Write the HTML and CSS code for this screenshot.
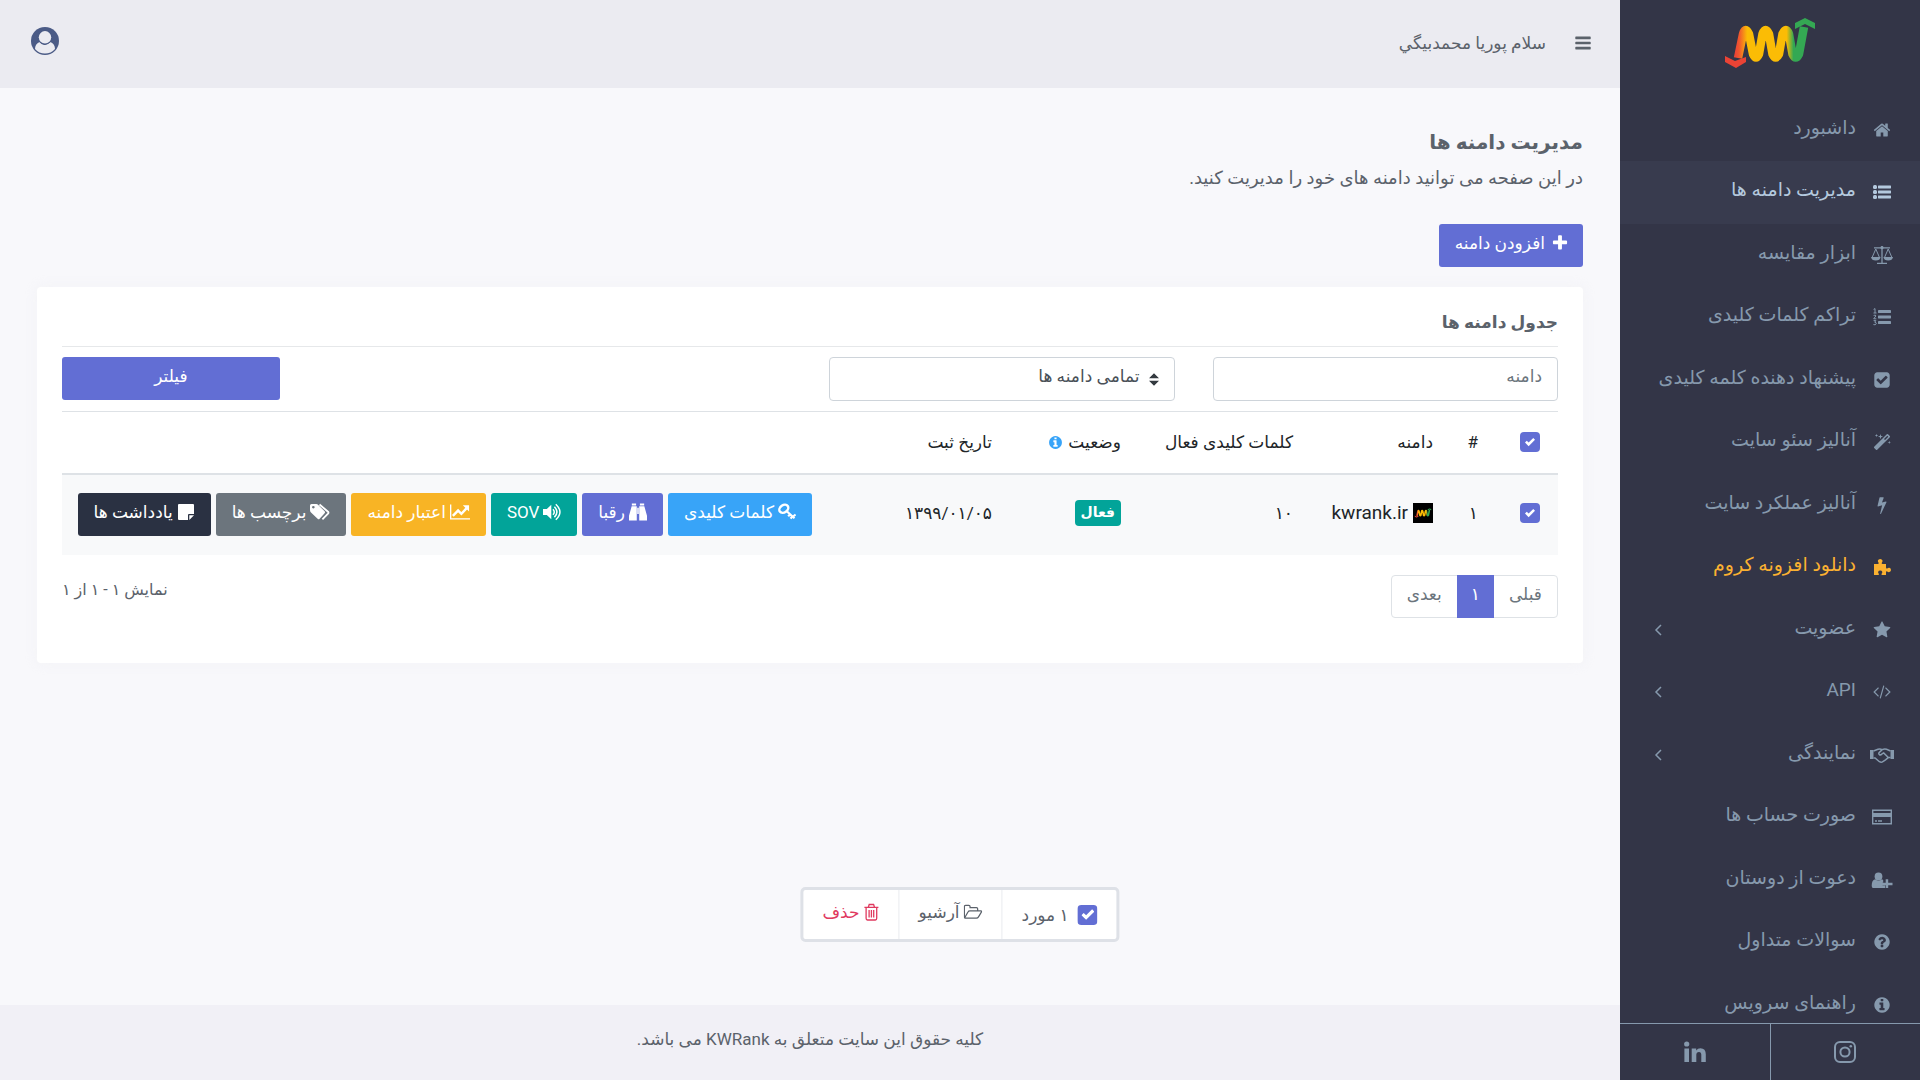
FILE: index.html
```html
<!DOCTYPE html>
<html lang="fa" dir="rtl">
<head>
    <meta charset="UTF-8">
    <meta name="viewport" content="width=device-width, initial-scale=1.0">
    <title>مدیریت دامنه ها</title>
    <link rel="stylesheet" href="styles.css">
</head>
<body>
    <!-- icon sprite -->
    <svg class="sprite" aria-hidden="true">
        <defs>
            <linearGradient id="logoGradient" gradientUnits="userSpaceOnUse" x1="10" y1="0" x2="78" y2="0">
                <stop offset="0" stop-color="#ea4335"/>
                <stop offset="0.06" stop-color="#f0562f"/>
                <stop offset="0.18" stop-color="#fbbc05"/>
                <stop offset="0.76" stop-color="#fbbc05"/>
                <stop offset="0.86" stop-color="#34a853"/>
                <stop offset="1" stop-color="#34a853"/>
            </linearGradient>
        </defs>
        <symbol id="logo" viewBox="0 0 90 50">
            <path d="M13 40 L18 16 Q20.500 8 24 16 L28 36 Q31 43 34 36 L37.500 16 Q40.500 8 44 16 L47.500 36 Q50.500 43 54 36 L57.500 16 Q61 8 64 16 L67.500 36 Q70.500 43 74 36 L79 9" fill="none" stroke="url(#logoGradient)" stroke-width="8.500" stroke-linejoin="round"/>
            <path d="M0 38 L10 43 L21 39 V44 L11 50 L0 44 Z" fill="#ea4335"/>
            <path d="M70 5 L80 0 L90 5 V11 L80 6 L70 11 Z" fill="#34a853"/>
        </symbol>
        <symbol id="home" viewBox="0 0 1792 1792"><path d="M1472 992v480q0 26-19 45t-45 19h-384v-384h-256v384h-384q-26 0-45-19t-19-45v-480q0-1 .5-3t.5-3l575-474 575 474q1 2 1 6zm223-69l-62 74q-8 9-21 11h-3q-13 0-21-7l-692-577-692 577q-12 8-24 7-13-2-21-11l-62-74q-8-10-7-23.5t11-21.5l719-599q32-26 76-26t76 26l244 204v-195q0-14 9-23t23-9h192q14 0 23 9t9 23v408l219 182q10 8 11 21.5t-7 23.5z"/></symbol>
        <symbol id="list" viewBox="0 0 18 18"><rect x="0" y="2" width="4" height="4" rx="1.5"/><rect x="0" y="7" width="4" height="4" rx="1.5"/><rect x="0" y="12" width="4" height="4" rx="1.5"/><rect x="5" y="2.5" width="13" height="3" rx=".4"/><rect x="5" y="7.5" width="13" height="3" rx=".4"/><rect x="5" y="12.5" width="13" height="3" rx=".4"/></symbol>
        <symbol id="list-ol" viewBox="0 0 18 18"><rect x="5" y="2" width="13" height="3" rx=".4"/><rect x="5" y="7.5" width="13" height="3" rx=".4"/><rect x="5" y="13" width="13" height="3" rx=".4"/><path d="M.6 1.4 2 .6V5M.5 5h3M.6 7.4q2.4-1 2.2.6L.7 10.8h2.6M.6 12.6h2.3l-1.2 1.6q1.8 0 1.5 1.7-.6 1.4-2.8.7" fill="none" stroke="currentColor"/></symbol>
        <symbol id="balance" viewBox="0 0 22 20"><path d="M3 2.8h16M11 1v17M6 18.3h10" fill="none" stroke="currentColor" stroke-width="1.3"/><circle cx="11" cy="2.7" r="1.6"/><path d="M4.8 4 1.1 12.5M4.8 4l3.7 8.5M17.2 4l-3.7 8.5M17.2 4l3.7 8.5" fill="none" stroke="currentColor" stroke-width="1"/><path d="M0 12h9.600q-.6 3.500-4.800 3.500T0 12zM12.400 12H22q-.6 3.500-4.800 3.500t-4.800-3.500z"/></symbol>
        <symbol id="check-square" viewBox="0 0 1792 1792"><path d="M813 1299l614-614q19-19 19-45t-19-45l-102-102q-19-19-45-19t-45 19l-467 467-211-211q-19-19-45-19t-45 19l-102 102q-19 19-19 45t19 45l358 358q19 19 45 19t45-19zm851-883v960q0 119-84.500 203.500t-203.500 84.500h-960q-119 0-203.500-84.500t-84.500-203.500v-960q0-119 84.500-203.500t203.500-84.500h960q119 0 203.500 84.500t84.500 203.500z"/></symbol>
        <symbol id="magic" viewBox="0 0 18 18"><path d="M13.800 1.200q.6-.6 1.200 0l1.800 1.800q.6.6 0 1.200L4.200 16.800q-.6.600-1.200 0L1.200 15q-.6-.6 0-1.200zM14.300 2.700 11 6l1 1 3.300-3.300z" fill-rule="evenodd"/><path d="m3.500.8.4 1.300 1.300.4-1.300.4-.4 1.300-.4-1.300-1.300-.4 1.300-.4zM7.500 1l.6 2 2 .6-2 .6-.6 2-.6-2-2-.6 2-.6zM16.300 7.700l.4 1.300 1.300.4-1.300.4-.4 1.300-.4-1.300-1.300-.4 1.300-.4z"/></symbol>
        <symbol id="bolt" viewBox="0 0 1792 1792"><path d="M1333 566q18 20 7 44l-540 1157q-13 25-42 25-4 0-14-2-17-5-25.500-19t-4.500-30l197-808-406 101q-4 1-12 1-18 0-31-11-18-15-13-39l201-825q4-14 16-23t28-9h328q19 0 32 12.500t13 29.500q0 8-5 18l-171 463 396-98q8-2 12-2 19 0 34 15z"/></symbol>
        <symbol id="puzzle" viewBox="0 0 18 18"><path d="M1 6h3.600q1.600 0 1-1.200Q4.600 3.600 4.900 2.500 5.400.9 7.200.9t2.300 1.600q.3 1.100-.7 2.300-.6 1.200 1 1.200H13v3.300q0 1.700 1.200 1.100 1.100-.9 2.200-.6 1.600.5 1.600 2.200t-1.600 2.100q-1.100.3-2.200-.7-1.200-.5-1.200 1V17H9.200q-1.200 0-.6-1.300 1-1.100.6-2-.4-1.200-2-1.200t-2 1.200q-.4.900.6 2 .6 1.300-.6 1.300H1z"/></symbol>
        <symbol id="star" viewBox="0 0 1792 1792"><path d="M1728 647q0 22-26 48l-363 354 86 500q1 7 1 20 0 21-10.500 35.500t-30.500 14.500q-19 0-40-12l-449-236-449 236q-22 12-40 12-21 0-31.500-14.500t-10.500-35.500q0-6 2-20l86-500-364-354q-25-27-25-48 0-37 56-46l502-73 225-455q19-41 49-41t49 41l225 455 502 73q56 9 56 46z"/></symbol>
        <symbol id="code" viewBox="0 0 1920 1920"><path d="M617 1399l-50 50q-10 10-23 10t-23-10l-466-466q-10-10-10-23t10-23l466-466q10-10 23-10t23 10l50 50q10 10 10 23t-10 23l-393 393 393 393q10 10 10 23t-10 23zm591-1067l-373 1291q-4 13-15.500 19.500t-23.500 2.500l-62-17q-13-4-19.500-15.500t-2.500-24.500l373-1291q4-13 15.500-19.500t23.500-2.500l62 17q13 4 19.500 15.500t2.500 24.500zm657 651l-466 466q-10 10-23 10t-23-10l-50-50q-10-10-10-23t10-23l393-393-393-393q-10-10-10-23t10-23l50-50q10-10 23-10t23 10l466 466q10 10 10 23t-10 23z"/></symbol>
        <symbol id="handshake" viewBox="0 0 24 18"><path d="M0 4h3.500v9H0zM20.500 4H24v9h-3.500z"/><path d="M3.500 5 8 3.300q2-.8 4.200.3 2.300-1 4.300-.3l4 1.700M3.500 12h1.600l4.300 3.700q2 1.200 3.500-.2l2.600-1.600 2.800-2.300h2.200M12.200 3.600 9 6.700q-.7 1.300.4 2 1.300.6 2.600-.8l1.700-1 4.600 4.700" fill="none" stroke="currentColor" stroke-width="1.500"/></symbol>
        <symbol id="credit-card" viewBox="0 0 20 18"><path d="M.7 2.200h18.600v13.600H.7z" fill="none" stroke="currentColor" stroke-width="1.400"/><path d="M1 5h18v4H1zM3 12.300h2v1.400H3zM6 12.300h4v1.400H6z"/></symbol>
        <symbol id="user-plus" viewBox="0 0 21 18"><circle cx="7" cy="5.500" r="3.900"/><path d="M3.600 8.300Q7 11 10.400 8.300L11.700 9v2.500H11v3h2.600V17H1.600Q.2 17 .2 14.800.2 9 3.600 8.300zM14.200 8.200h2.500v3.500H21v2.500h-4.300V17h-2.500v-2.800h-3.400v-2.500h3.400z"/></symbol>
        <symbol id="question" viewBox="0 0 1792 1792"><path d="M1024 1376v-192q0-14-9-23t-23-9h-192q-14 0-23 9t-9 23v192q0 14 9 23t23 9h192q14 0 23-9t9-23zm256-672q0-88-55.500-163t-138.500-116-170-41q-243 0-371 213-15 24 8 42l132 100q7 6 19 6 16 0 25-12 53-68 86-92 34-24 86-24 48 0 85.500 26t37.500 59q0 38-20 61t-68 45q-63 28-115.500 86.500t-52.500 125.500v36q0 14 9 23t23 9h192q14 0 23-9t9-23q0-19 21.500-49.500t54.500-49.500q32-18 49-28.500t46-35 44.500-48 28-60.500 12.500-81zm384 192q0 209-103 385.500t-279.500 279.500-385.500 103-385.500-103-279.500-279.500-103-385.500 103-385.500 279.500-279.500 385.500-103 385.500 103 279.500 279.500 103 385.500z"/></symbol>
        <symbol id="info" viewBox="0 0 1792 1792"><path d="M1152 1376v-160q0-14-9-23t-23-9h-96v-512q0-14-9-23t-23-9h-320q-14 0-23 9t-9 23v160q0 14 9 23t23 9h96v320h-96q-14 0-23 9t-9 23v160q0 14 9 23t23 9h448q14 0 23-9t9-23zm-128-896v-160q0-14-9-23t-23-9h-192q-14 0-23 9t-9 23v160q0 14 9 23t23 9h192q14 0 23-9t9-23zm640 416q0 209-103 385.500t-279.500 279.500-385.500 103-385.500-103-279.500-279.500-103-385.500 103-385.500 279.500-279.500 385.500-103 385.500 103 279.500 279.500 103 385.500z"/></symbol>
        <symbol id="instagram" viewBox="0 0 22 22"><rect x="1" y="1" width="20" height="20" rx="5" fill="none" stroke="currentColor" stroke-width="2"/><circle cx="11" cy="11" r="4.600" fill="none" stroke="currentColor" stroke-width="2"/><circle cx="16.800" cy="5.200" r="1.300"/></symbol>
        <symbol id="linkedin" viewBox="0 0 22 22"><circle cx="2.700" cy="3" r="2.600"/><path d="M.4 7.500H5V21H.4zM7.700 7.500h4.500v2q1.500-2.300 4.200-2.300 5.400 0 5.400 6V21h-4.500v-7.200q0-2.900-2.300-2.900-2.700 0-2.700 2.900V21H7.700z"/></symbol>
        <symbol id="bars" viewBox="0 0 1792 1792"><path d="M1664 1344v128q0 26-19 45t-45 19h-1408q-26 0-45-19t-19-45v-128q0-26 19-45t45-19h1408q26 0 45 19t19 45zm0-512v128q0 26-19 45t-45 19h-1408q-26 0-45-19t-19-45v-128q0-26 19-45t45-19h1408q26 0 45 19t19 45zm0-512v128q0 26-19 45t-45 19h-1408q-26 0-45-19t-19-45v-128q0-26 19-45t45-19h1408q26 0 45 19t19 45z"/></symbol>
        <symbol id="account" viewBox="0 0 28 28"><circle cx="14" cy="14" r="14"/><path d="M8.500 15q2.500 3.500 5.500 3t5.500-3Q24 17 24 22q-4 4.600-10 4.600T4 22q0-5 4.500-7z" fill="#ebebf1"/><circle cx="14" cy="10.500" r="7.200"/><circle cx="14" cy="10.300" r="6.200" fill="#ebebf1"/></symbol>
        <symbol id="plus" viewBox="0 0 1792 1792"><path d="M1600 736v192q0 40-28 68t-68 28h-416v416q0 40-28 68t-68 28h-192q-40 0-68-28t-28-68v-416h-416q-40 0-68-28t-28-68v-192q0-40 28-68t68-28h416v-416q0-40 28-68t68-28h192q40 0 68 28t28 68v416h416q40 0 68 28t28 68z"/></symbol>
        <symbol id="key" viewBox="0 0 18 18"><ellipse cx="5.800" cy="5.800" rx="4.800" ry="3.600" transform="rotate(-35 5.800 5.800)" fill="none" stroke="currentColor" stroke-width="2.400"/><path d="m9 8.500 7.500 6.800M12.300 11l-2.100 2.400M14.600 13l-2 2.700M15 13.500l2.600-2" fill="none" stroke="currentColor" stroke-width="2.200"/></symbol>
        <symbol id="binoculars" viewBox="0 0 19 18"><path d="M3 0h4.500v2.200H3zM11.500 0H16v2.200h-4.500zM2.800 3h5.400v15H0v-5zM10.800 3h5.400L19 13v5h-8.200zM8.700 4.500h1.600V11H8.700z"/></symbol>
        <symbol id="volume" viewBox="0 0 18 18"><path d="M0 6h3.800L8.300 1.700v14.600L3.800 12H0z"/><path d="M10 6.200q2.500 2.800 0 5.600M11.400 3.700q5 5.300 0 10.600M12.800 1.200q8.300 7.800 0 15.600" fill="none" stroke="currentColor" stroke-width="1.500"/></symbol>
        <symbol id="chart" viewBox="0 0 21 18"><path d="M.7 1v15.300H21" fill="none" stroke="currentColor" stroke-width="1.400"/><path d="m3 13 5.500-5.500 3.500 3.400L17.500 5" fill="none" stroke="currentColor" stroke-width="2.600"/><path d="M13.500 2H20v6.500z"/></symbol>
        <symbol id="tags" viewBox="0 0 20 18"><path d="M0 2.500Q0 1 1.500 1h4.800q1 0 2 1l6.300 6.300q.9 1 0 2l-5 5.500q-1 1-2 0L1 9.500Q0 8.500 0 7zM3.300 2.900a1.300 1.300 0 1 0 .1 0z" fill-rule="evenodd"/><path d="m9.500 1.500 8.500 7.200q.9 1 0 2l-5.600 5.600" fill="none" stroke="currentColor" stroke-width="1.800"/></symbol>
        <symbol id="note" viewBox="0 0 18 18"><path d="M1 2q0-1 1-1h14q1 0 1 1v9h-5q-1 0-1 1v5H2q-1 0-1-1zM12.300 12.300H17l-4.700 4.700z"/></symbol>
        <symbol id="folder" viewBox="0 0 20 18"><path d="M1 14V3.300Q1 2 2.300 2h3.400Q7 2 7 3.300v1h6.700Q15 4.300 15 5.600v2M1.200 15.300 4.800 9q.6-1.200 2-1.200h11.500q1.500 0 .6 1.400l-3 5q-.8 1.300-2.300 1.300H2.300Q1 15.500 1 14" fill="none" stroke="currentColor" stroke-width="1.300"/></symbol>
        <symbol id="trash" viewBox="0 0 16 18"><path d="M1 4.300h14M5 4l.8-2.500h4.400L11 4M2.700 4.500v10.800Q2.700 17 4 17h8q1.300 0 1.300-1.700V4.500M5.700 7v7.500M8 7v7.500M10.300 7v7.500" fill="none" stroke="currentColor" stroke-width="1.300"/></symbol>
        <symbol id="chevron" viewBox="0 0 10 14"><path d="M8 2 3 7l5 5" fill="none" stroke="currentColor" stroke-width="1.500"/></symbol>
    </svg>

    <aside class="sidebar">
        <a class="brand" href="#" aria-label="KWRank"><svg><use href="#logo"/></svg></a>
        <nav>
            <ul class="menu">
                <li><a href="#"><svg class="icon"><use href="#home"/></svg><span>داشبورد</span></a></li>
                <li class="active"><a href="#"><svg class="icon"><use href="#list"/></svg><span>مدیریت دامنه ها</span></a></li>
                <li><a href="#"><svg class="icon wide"><use href="#balance"/></svg><span>ابزار مقایسه</span></a></li>
                <li><a href="#"><svg class="icon"><use href="#list-ol"/></svg><span>تراکم کلمات کلیدی</span></a></li>
                <li><a href="#"><svg class="icon"><use href="#check-square"/></svg><span>پیشنهاد دهنده کلمه کلیدی</span></a></li>
                <li><a href="#"><svg class="icon"><use href="#magic"/></svg><span>آنالیز سئو سایت</span></a></li>
                <li><a href="#"><svg class="icon"><use href="#bolt"/></svg><span>آنالیز عملکرد سایت</span></a></li>
                <li class="highlight"><a href="#"><svg class="icon"><use href="#puzzle"/></svg><span>دانلود افزونه کروم</span></a></li>
                <li><a href="#"><svg class="icon"><use href="#star"/></svg><span>عضویت</span><svg class="chevron"><use href="#chevron"/></svg></a></li>
                <li><a href="#"><svg class="icon"><use href="#code"/></svg><span>API</span><svg class="chevron"><use href="#chevron"/></svg></a></li>
                <li><a href="#"><svg class="icon wide"><use href="#handshake"/></svg><span>نمایندگی</span><svg class="chevron"><use href="#chevron"/></svg></a></li>
                <li><a href="#"><svg class="icon"><use href="#credit-card"/></svg><span>صورت حساب ها</span></a></li>
                <li><a href="#"><svg class="icon"><use href="#user-plus"/></svg><span>دعوت از دوستان</span></a></li>
                <li><a href="#"><svg class="icon"><use href="#question"/></svg><span>سوالات متداول</span></a></li>
                <li><a href="#"><svg class="icon"><use href="#info"/></svg><span>راهنمای سرویس</span></a></li>
            </ul>
        </nav>
        <div class="social">
            <a href="#" aria-label="Instagram"><svg><use href="#instagram"/></svg></a>
            <a href="#" aria-label="LinkedIn"><svg><use href="#linkedin"/></svg></a>
        </div>
    </aside>

    <div class="page">
        <header class="topbar">
            <button type="button" class="icon-btn" aria-label="منو"><svg class="bars"><use href="#bars"/></svg></button>
            <span class="greeting">سلام پوریا محمدبیگي</span>
            <button type="button" class="icon-btn account" aria-label="حساب کاربری"><svg><use href="#account"/></svg></button>
        </header>

        <main class="content">
            <h1>مدیریت دامنه ها</h1>
            <p class="description">در این صفحه می توانید دامنه های خود را مدیریت کنید.</p>
            <button type="button" class="btn primary add-btn"><svg><use href="#plus"/></svg>افزودن دامنه</button>

            <section class="card">
                <h2>جدول دامنه ها</h2>
                <form class="filters">
                    <input type="text" class="field" placeholder="دامنه" aria-label="دامنه">
                    <select class="field" aria-label="وضعیت دامنه">
                        <option>تمامی دامنه ها</option>
                    </select>
                    <button type="button" class="btn primary filter-btn">فیلتر</button>
                </form>

                <table class="domains">
                    <thead>
                        <tr>
                            <th class="col-check"><input type="checkbox" class="check" aria-label="انتخاب همه" checked></th>
                            <th class="col-num">#</th>
                            <th class="col-domain">دامنه</th>
                            <th class="col-keywords">کلمات کلیدی فعال</th>
                            <th class="col-status"><span class="status-title">وضعیت<svg class="info"><use href="#info"/></svg></span></th>
                            <th class="col-date">تاریخ ثبت</th>
                            <th></th>
                        </tr>
                    </thead>
                    <tbody>
                        <tr>
                            <td><input type="checkbox" class="check" aria-label="انتخاب kwrank.ir" checked></td>
                            <td>۱</td>
                            <td><span class="domain"><svg class="favicon" viewBox="-8 -25 106 100"><use href="#logo" width="90" height="50"/></svg>kwrank.ir</span></td>
                            <td>۱۰</td>
                            <td><span class="badge">فعال</span></td>
                            <td>۱۳۹۹/۰۱/۰۵</td>
                            <td class="actions-cell">
                                <div class="actions">
                                    <button type="button" class="btn info-btn"><svg><use href="#key"/></svg>کلمات کلیدی</button>
                                    <button type="button" class="btn primary"><svg><use href="#binoculars"/></svg>رقبا</button>
                                    <button type="button" class="btn success"><svg><use href="#volume"/></svg>SOV</button>
                                    <button type="button" class="btn warning"><svg class="wide"><use href="#chart"/></svg>اعتبار دامنه</button>
                                    <button type="button" class="btn secondary"><svg class="wide"><use href="#tags"/></svg>برچسب ها</button>
                                    <button type="button" class="btn dark"><svg><use href="#note"/></svg>یادداشت ها</button>
                                </div>
                            </td>
                        </tr>
                    </tbody>
                </table>

                <div class="table-footer">
                    <nav class="pagination">
                        <a href="#">قبلی</a>
                        <a href="#" class="current">۱</a>
                        <a href="#">بعدی</a>
                    </nav>
                    <span class="range">نمایش ۱ - ۱ از ۱</span>
                </div>
            </section>
        </main>

        <footer class="footer">کلیه حقوق این سایت متعلق به KWRank می باشد.</footer>
    </div>

    <div class="bulk-bar">
        <label><input type="checkbox" class="check" checked>۱ مورد</label>
        <button type="button"><svg><use href="#folder"/></svg>آرشیو</button>
        <button type="button" class="danger"><svg><use href="#trash"/></svg>حذف</button>
    </div>
</body>
</html>
```

FILE: styles.css
```css
* {
    margin: 0;
    padding: 0;
    box-sizing: border-box;
}

body {
    display: flex;
    min-height: 100vh;
    background: #f8f8fb;
    color: #5b626b;
    font-family: Roboto, 'DejaVu Sans', sans-serif;
    font-size: 17px;
    line-height: 24px;
}

button, input, select {
    font: inherit;
}

button {
    cursor: pointer;
}

a {
    color: inherit;
    text-decoration: none;
}

svg {
    fill: currentColor;
    flex: none;
}

.sprite {
    position: absolute;
    width: 0;
    height: 0;
}

/* sidebar */

.sidebar {
    display: flex;
    flex-direction: column;
    width: 300px;
    height: 100vh;
    flex: none;
    position: sticky;
    top: 0;
    background: #333547;
    color: #8699ad;
}

.brand {
    display: flex;
    justify-content: center;
    padding: 18px 0 31px;
}

.brand svg {
    width: 90px;
    height: 50px;
}

.sidebar nav {
    flex: 1;
    min-height: 0;
    overflow: hidden;
}

.menu {
    list-style: none;
}

.menu a {
    display: flex;
    align-items: center;
    height: 62px;
    padding: 0 26px;
    font-size: 19px;
}

.menu span {
    padding-bottom: 4px;
}

.menu li:nth-child(even) {
    padding-bottom: 1px;
}

.menu .active {
    background: #383b4e;
    color: #b4c9de;
}

.menu .highlight {
    color: #fbb131;
}

.menu .icon {
    width: 24px;
    height: 18px;
    margin-left: 14px;
}

.menu .wide {
    height: 20px;
}

.menu .chevron {
    width: 10px;
    height: 14px;
    margin-right: auto;
    margin-left: 7px;
}

.social {
    display: flex;
    border-top: 1px solid #8699ad;
}

.social a {
    display: flex;
    flex: 1;
    align-items: center;
    justify-content: center;
    height: 56px;
}

.social a + a {
    border-right: 1px solid #8699ad;
}

.social svg {
    width: 22px;
    height: 22px;
}

/* page */

.page {
    display: flex;
    flex: 1;
    flex-direction: column;
    min-width: 0;
}

.topbar {
    display: flex;
    align-items: center;
    height: 88px;
    padding: 0 28px 2px;
    background: #ebebf1;
}

.icon-btn {
    display: flex;
    border: none;
    background: none;
    color: inherit;
}

.bars {
    width: 18px;
    height: 18px;
}

.greeting {
    margin-right: 28px;
}

.account {
    margin-right: auto;
    margin-left: 3px;
    padding-bottom: 4px;
    color: #4b5b86;
}

.account svg {
    width: 28px;
    height: 28px;
}

.content {
    flex: 1;
    padding: 38px 37px;
}

h1 {
    padding-top: 2px;
    font-size: 20px;
    line-height: 28px;
}

.description {
    margin: 10px 0 34px;
    font-size: 18px;
}

.btn {
    display: inline-flex;
    align-items: center;
    justify-content: center;
    gap: 4px;
    height: 43px;
    padding: 0 16px 6px;
    border: none;
    border-radius: 3px;
    color: #fff;
    white-space: nowrap;
}

.btn svg {
    width: 18px;
    height: 18px;
}

.btn .wide {
    width: 20px;
}

.primary { background: #626ed4; }
.info-btn { background: #38a4f8; }
.success { background: #02a499; }
.warning { background: #f8b425; }
.secondary { background: #6c757d; }
.dark { background: #2a3142; }

.add-btn {
    gap: 6px;
    padding-right: 14px;
}

.card {
    margin-top: 20px;
    padding: 21px 25px 45px;
    border-radius: 4px;
    background: #fff;
    box-shadow: 0 0 13px rgba(236, 236, 241, 0.44);
}

h2 {
    padding-bottom: 10px;
    border-bottom: 1px solid #e6e8ea;
    font-size: 17px;
    line-height: 28px;
}

.filters {
    display: grid;
    grid-template-columns: repeat(12, 1fr);
    column-gap: 38px;
    padding: 10px 0;
}

.field {
    grid-column: span 3;
    width: 100%;
    height: 44px;
    padding: 0 15px 6px;
    border: 1px solid #ced4da;
    border-radius: 4px;
    background: #fff;
    color: #495057;
}

.field::placeholder {
    color: #6c757d;
}

select.field {
    appearance: none;
    padding-right: 34px;
    background: #fff url("data:image/svg+xml,%3Csvg xmlns='http://www.w3.org/2000/svg' viewBox='0 0 4 5'%3E%3Cpath fill='%23343a40' d='M2 0L0 2h4zm0 5L0 3h4z'/%3E%3C/svg%3E") no-repeat right 15px center / 10px 13px;
}

.filter-btn {
    grid-column: 11 / 13;
}

.check {
    appearance: none;
    display: block;
    width: 20px;
    height: 20px;
    border-radius: 4px;
    background: #626ed4 url("data:image/svg+xml,%3Csvg xmlns='http://www.w3.org/2000/svg' viewBox='0 0 8 8'%3E%3Cpath fill='%23fff' d='M6.600.7L2.900 4.400 1.400 3 0 4.400l2.900 2.900 5.100-5.100z'/%3E%3C/svg%3E") no-repeat center / 10px 10px;
}

.domains {
    width: 100%;
    border-collapse: collapse;
    table-layout: fixed;
    color: #212529;
}

.domains th,
.domains td {
    padding: 0 15px;
    text-align: right;
    white-space: nowrap;
}

.domains th {
    height: 62px;
    border-top: 1px solid #dee2e6;
    border-bottom: 2px solid #dee2e6;
    font-weight: 400;
}

.domains td {
    height: 81px;
    padding-bottom: 4px;
    background: #f8f9fa;
}

.domains .actions-cell {
    padding-bottom: 0;
}

.domains .check {
    margin-right: 3px;
}

.col-check { width: 65px; }
.col-num { width: 45px; }
.col-domain { width: 140px; }
.col-keywords { width: 172px; }
.col-status { width: 129px; }
.col-date { width: 180px; }

.status-title {
    display: flex;
    align-items: center;
    gap: 5px;
}

.info {
    width: 15px;
    height: 15px;
    color: #38a4f8;
}

.domain {
    display: flex;
    align-items: center;
    gap: 5px;
    font-size: 19px;
}

.favicon {
    width: 20px;
    height: 20px;
    background: #000;
}

.badge {
    display: inline-block;
    padding: 0 6px 2px;
    border-radius: 4px;
    background: #02a499;
    color: #fff;
    font-weight: 700;
    font-size: 14px;
}

.actions {
    display: flex;
    gap: 5px;
}

.table-footer {
    display: flex;
    justify-content: space-between;
    padding-top: 20px;
}

.range {
    padding-top: 3px;
    font-size: 16px;
}

.pagination {
    display: flex;
    border: 1px solid #dee2e6;
    border-radius: 4px;
    color: #6c757d;
}

.pagination a {
    height: 41px;
    padding: 6px 15px;
}

.pagination .current {
    height: 43px;
    margin: -1px 0;
    padding: 7px 14px;
    background: #626ed4;
    color: #fff;
}

.footer {
    height: 75px;
    padding: 22px 0;
    background: #f1f0f6;
    text-align: center;
}

/* selection bar floating over the page */

.bulk-bar {
    display: flex;
    position: fixed;
    bottom: 138px;
    left: 50%;
    transform: translateX(-50%);
    height: 55px;
    border: 3px solid #dee1e7;
    border-radius: 5px;
    background: #fff;
}

.bulk-bar label,
.bulk-bar button {
    display: flex;
    align-items: center;
    gap: 4px;
    padding: 0 19px;
    border: none;
    background: none;
    color: inherit;
}

.bulk-bar label {
    gap: 9px;
}

.bulk-bar button {
    padding-bottom: 6px;
    border-right: 1px solid #e9ebef;
}

.bulk-bar .check {
    background-size: 13px 13px;
}

.bulk-bar svg {
    width: 19px;
    height: 18px;
}

.bulk-bar .danger {
    color: #e03a5f;
}

.bulk-bar .danger svg {
    width: 16px;
}
```
